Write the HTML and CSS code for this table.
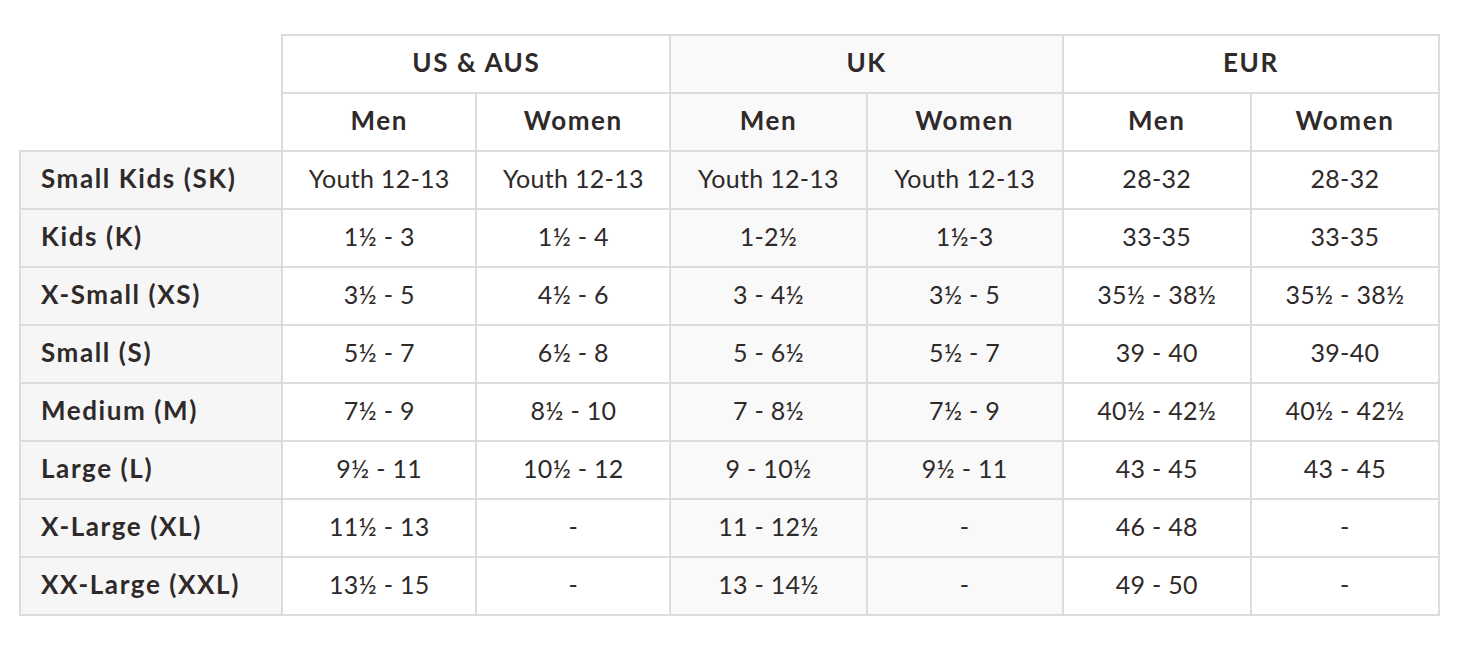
FILE: index.html
```html
<!DOCTYPE html>
<html>
<head>
<meta charset="utf-8">
<link rel="stylesheet" href="styles.css">
</head>
<body>
<table class="size-table">
  <colgroup>
    <col class="c-label">
    <col class="c-a"><col class="c-a">
    <col class="c-b"><col class="c-b">
    <col class="c-c"><col class="c-c">
  </colgroup>
  <thead>
    <tr>
      <th class="corner" rowspan="2"></th>
      <th colspan="2">US &amp; AUS</th>
      <th colspan="2" class="uk">UK</th>
      <th colspan="2">EUR</th>
    </tr>
    <tr>
      <th>Men</th><th>Women</th>
      <th class="uk">Men</th><th class="uk">Women</th>
      <th>Men</th><th>Women</th>
    </tr>
  </thead>
  <tbody>
    <tr><th class="label">Small Kids (SK)</th><td>Youth 12-13</td><td>Youth 12-13</td><td class="uk">Youth 12-13</td><td class="uk">Youth 12-13</td><td>28-32</td><td>28-32</td></tr>
    <tr><th class="label">Kids (K)</th><td>1½ - 3</td><td>1½ - 4</td><td class="uk">1-2½</td><td class="uk">1½-3</td><td>33-35</td><td>33-35</td></tr>
    <tr><th class="label">X-Small (XS)</th><td>3½ - 5</td><td>4½ - 6</td><td class="uk">3 - 4½</td><td class="uk">3½ - 5</td><td>35½ - 38½</td><td>35½ - 38½</td></tr>
    <tr><th class="label">Small (S)</th><td>5½ - 7</td><td>6½ - 8</td><td class="uk">5 - 6½</td><td class="uk">5½ - 7</td><td>39 - 40</td><td>39-40</td></tr>
    <tr><th class="label">Medium (M)</th><td>7½ - 9</td><td>8½ - 10</td><td class="uk">7 - 8½</td><td class="uk">7½ - 9</td><td>40½ - 42½</td><td>40½ - 42½</td></tr>
    <tr><th class="label">Large (L)</th><td>9½ - 11</td><td>10½ - 12</td><td class="uk">9 - 10½</td><td class="uk">9½ - 11</td><td>43 - 45</td><td>43 - 45</td></tr>
    <tr><th class="label">X-Large (XL)</th><td>11½ - 13</td><td>-</td><td class="uk">11 - 12½</td><td class="uk">-</td><td>46 - 48</td><td>-</td></tr>
    <tr><th class="label">XX-Large (XXL)</th><td>13½ - 15</td><td>-</td><td class="uk">13 - 14½</td><td class="uk">-</td><td>49 - 50</td><td>-</td></tr>
  </tbody>
</table>
</body>
</html>
```
FILE: styles.css
```css
html, body {
  margin: 0;
  background: #ffffff;
}
body {
  padding: 34px 0 0 19px;
  font-family: "Lato", "Open Sans", sans-serif;
  color: #2f2a29;
}
.size-table {
  border-collapse: collapse;
  table-layout: fixed;
  width: 1421px;
}
.c-label { width: 262px; }
.c-a { width: 194px; }
.c-b { width: 196px; }
.c-c { width: 188px; }
.size-table th,
.size-table td {
  border: 2px solid #dcdcdc;
  height: 52px;
  padding: 0 0 4px 0;
  text-align: center;
  font-size: 25px;
  font-weight: 400;
  line-height: 1;
  letter-spacing: 0.3px;
  white-space: nowrap;
}
.size-table th {
  font-weight: 700;
  font-size: 26px;
  letter-spacing: 1.6px;
}
.size-table .corner {
  border: none;
  background: transparent;
}
.size-table .uk {
  background: #f9f9f9;
}
.size-table .label {
  text-align: left;
  padding-left: 20px;
  background: #f6f6f6;
}
```
